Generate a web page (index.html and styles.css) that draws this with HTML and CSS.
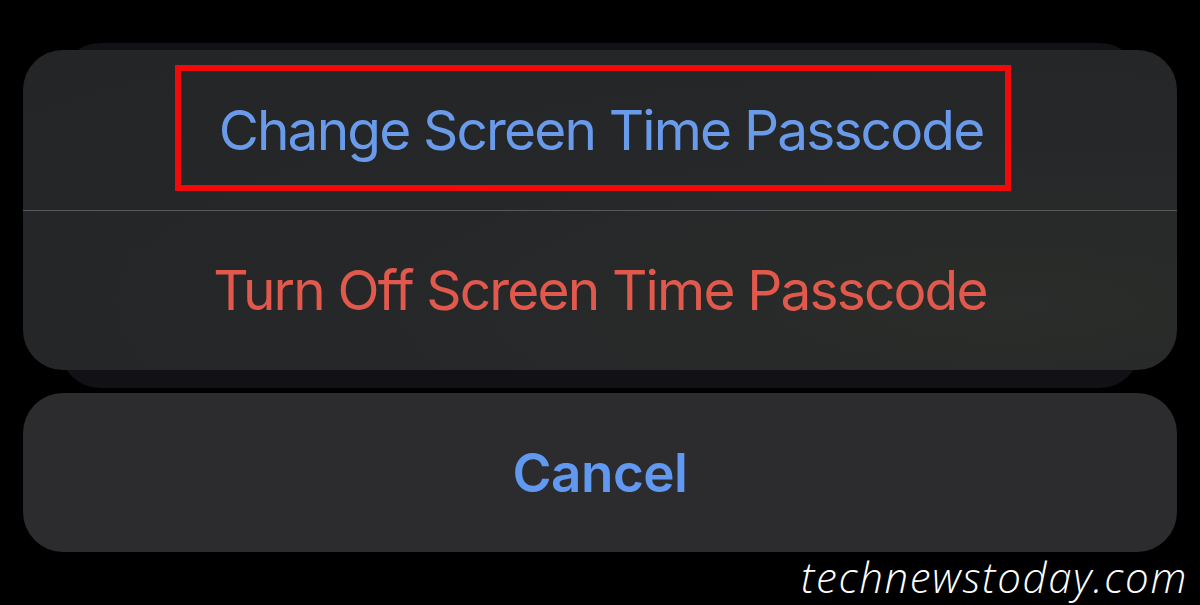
FILE: index.html
```html
<!DOCTYPE html>
<html lang="en">
<head>
    <meta charset="UTF-8">
    <meta name="viewport" content="width=device-width, initial-scale=1.0">
    <title>Screen Time Passcode</title>
    <link rel="stylesheet" href="styles.css">
</head>
<body>
<div class="sheet">
    <div class="action-group">
        <div class="action-row">
            <span class="highlight"></span>
            <span class="action-label blue">Change Screen Time Passcode</span>
        </div>
        <div class="divider"></div>
        <div class="action-row">
            <span class="action-label red">Turn Off Screen Time Passcode</span>
        </div>
    </div>

    <div class="cancel-card">
        <span class="cancel-label">Cancel</span>
    </div>
</div>

<div class="watermark">technewstoday.com</div>
</body>
</html>
```

FILE: styles.css
```css
* {
    margin: 0;
    padding: 0;
    box-sizing: border-box;
}

body {
    background: #000;
    width: 1200px;
    height: 605px;
    overflow: hidden;
    position: relative;
    font-family: Inter, "Liberation Sans", sans-serif;
}

.sheet {
    display: flex;
    flex-direction: column;
    padding: 50px 23px 0 23px;
    gap: 23px;
}

.action-group {
    position: relative;
    height: 320px;
    display: flex;
    flex-direction: column;
    border-radius: 40px;
    background: radial-gradient(ellipse at 85% 80%, #2a2d2a 0%, #262729 45%, #242527 100%);
}

/* the second sheet peeking out behind */
.action-group::before {
    content: "";
    position: absolute;
    left: 37px;
    right: 37px;
    top: -7px;
    bottom: -18px;
    border-radius: 40px;
    background: #111116;
    z-index: -1;
}

.action-row {
    position: relative;
    flex: 1;
    display: flex;
    align-items: center;
    justify-content: center;
}

.divider {
    height: 1px;
    background: #58595c;
}

.action-label {
    font-size: 55px;
    font-weight: 400;
    letter-spacing: -1.85px;
}

.blue {
    color: #6a9bea;
    margin-left: 2px;
}

.red {
    color: #e0594c;
}

.highlight {
    position: absolute;
    left: 152px;
    top: 15px;
    width: 836px;
    height: 126px;
    border: 6px solid #f20a0a;
}

.cancel-card {
    height: 159px;
    border-radius: 40px;
    background: #2c2c2f;
    display: flex;
    align-items: center;
    justify-content: center;
}

.cancel-label {
    font-size: 53px;
    font-weight: 600;
    letter-spacing: -0.5px;
    color: #6198f0;
}

.watermark {
    position: absolute;
    right: 12px;
    bottom: 0;
    font-family: "Open Sans", sans-serif;
    font-style: italic;
    font-weight: 300;
    font-size: 42px;
    letter-spacing: 1.7px;
    color: #fff;
    line-height: 1.36;
}
```
